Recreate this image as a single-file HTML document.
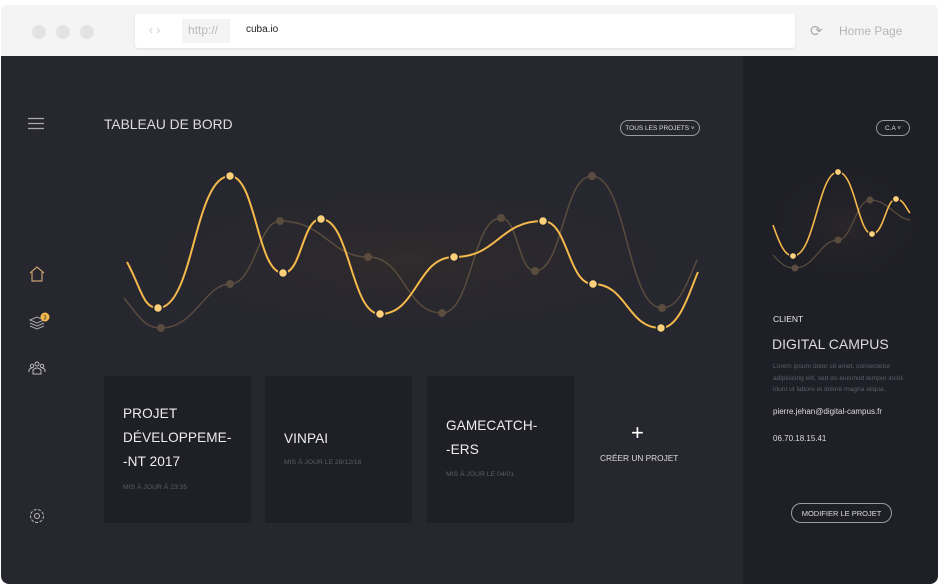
<!DOCTYPE html>
<html><head><meta charset="utf-8"><style>
*{margin:0;padding:0;box-sizing:border-box}
body{width:939px;height:585px;background:#fff;font-family:"Liberation Sans",sans-serif;position:relative;overflow:hidden}
.top{position:absolute;left:1px;top:5px;width:937px;height:52px;background:#f4f4f4;border-radius:6px 6px 0 0}
.dot{position:absolute;width:14px;height:14px;border-radius:50%;background:#e3e3e3}
.url{position:absolute;left:135px;top:14px;width:660px;height:34px;background:#fff;border-radius:3px;box-shadow:0 1px 3px rgba(0,0,0,.08)}
.main{position:absolute;left:1px;top:56px;width:742px;height:528px;background:#27272f;border-radius:0 0 0 8px}
.side{position:absolute;left:743px;top:56px;width:195px;height:528px;background:#1f1f27;border-radius:0 0 8px 0}
.t{position:absolute;color:#e8e8ea;white-space:nowrap}
.card{position:absolute;top:376px;width:147px;height:147px;background:#1f1f26}
.card .h{position:absolute;left:19px;color:#eee;font-size:13.6px;line-height:24px;letter-spacing:.1px}
.card .s{position:absolute;left:19px;color:#5c5c66;font-size:6.8px;letter-spacing:0}
.pill{position:absolute;border:1px solid #9a9aa2;border-radius:10px;color:#ddd;font-size:6.5px;display:flex;align-items:center;justify-content:center;white-space:nowrap}
</style></head><body>
<div class="top">
<div class="dot" style="left:31px;top:20px"></div><div class="dot" style="left:55px;top:20px"></div><div class="dot" style="left:79px;top:20px"></div>
</div>
<div class="url">
<span class="t" style="left:14px;top:9px;color:#ccc;font-size:12px">‹ ›</span>
<div style="position:absolute;left:47px;top:5px;width:48px;height:24px;background:#f4f4f4"></div>
<span class="t" style="left:53px;top:9px;color:#bbb;font-size:12px">http://</span>
<span class="t" style="left:111px;top:10px;color:#222;font-size:10px">cuba.io</span>
</div>
<span class="t" style="left:810px;top:22px;color:#aaa;font-size:15px">⟳</span>
<span class="t" style="left:839px;top:24px;color:#b5b5b5;font-size:12px">Home Page</span>

<div class="main"></div>
<div class="side"></div>

<svg style="position:absolute;left:28px;top:117px" width="18" height="14"><path d="M0 1.5H16M0 6.5H16M0 11.5H16" stroke="#aaa" stroke-width="1.2"/></svg>
<svg style="position:absolute;left:28px;top:265px" width="18" height="18"><path d="M2 8L9 2L16 8M4 7V16H14V7" fill="none" stroke="#c9a070" stroke-width="1.2"/></svg>
<svg style="position:absolute;left:28px;top:312px" width="22" height="20"><path d="M2 8L9 5L16 8L9 11Z M2 11L9 14L16 11 M2 14L9 17L16 14" fill="none" stroke="#aaa" stroke-width="1"/><circle cx="17" cy="5" r="4.5" fill="#f5b94c"/><text x="15.3" y="7.5" font-size="6" fill="#333" font-family="Liberation Sans">3</text></svg>
<svg style="position:absolute;left:28px;top:360px" width="18" height="16"><g fill="none" stroke="#bbb" stroke-width="1"><circle cx="9" cy="4" r="2"/><circle cx="4" cy="6" r="1.7"/><circle cx="14" cy="6" r="1.7"/><path d="M5 14V10Q9 6 13 10V14Z M1 12V10Q2 8 4 8 M17 12V10Q16 8 14 8"/></g></svg>
<svg style="position:absolute;left:28px;top:507px" width="18" height="18"><circle cx="9" cy="9" r="2.5" fill="none" stroke="#bbb"/><circle cx="9" cy="9" r="6.5" fill="none" stroke="#bbb" stroke-dasharray="3 1.5"/></svg>

<span class="t" style="left:104px;top:117px;font-size:13.8px;color:#ddd;letter-spacing:0">TABLEAU DE BORD</span>
<div class="pill" style="left:620px;top:120px;width:80px;height:16px">TOUS LES PROJETS ˅</div>
<div class="pill" style="left:876px;top:120px;width:34px;height:16px">C.A ˅</div>

<svg style="position:absolute;left:0;top:0" width="939" height="585">
<defs><radialGradient id="g"><stop offset="0" stop-color="#3a3028" stop-opacity=".5"/><stop offset="1" stop-color="#27272f" stop-opacity="0"/></radialGradient>
<radialGradient id="g2"><stop offset="0" stop-color="#2e2a2a" stop-opacity=".7"/><stop offset="1" stop-color="#1f1f27" stop-opacity="0"/></radialGradient></defs>
<ellipse cx="410" cy="260" rx="300" ry="80" fill="url(#g)"/>
<ellipse cx="845" cy="225" rx="85" ry="65" fill="url(#g2)"/>
<path d="M124,298 C140,318 145,328 161,328 C195,328 205,284 230,284 C255,284 258,221 280,221 C325,221 330,257 368,257 C405,257 405,313 442,313 C472,313 472,218 501,218 C518,218 518,271 535,271 C563,271 563,176 592,176 C627,176 627,308 662,308 C680,308 688,280 697,260" fill="none" stroke="#5a4c3e" stroke-width="1.5"/>
<g fill="#5a4c3e"><circle cx="161" cy="328" r="4"/><circle cx="230" cy="284" r="4"/><circle cx="280" cy="221" r="4"/><circle cx="368" cy="257" r="4"/><circle cx="442" cy="313" r="4"/><circle cx="501" cy="218" r="4"/><circle cx="535" cy="271" r="4"/><circle cx="592" cy="176" r="4"/><circle cx="662" cy="308" r="4"/></g>
<path d="M127,262 C142,290 143,308 158,308 C194,308 194,176 230,176 C256,176 257,273 283,273 C302,273 302,219 321,219 C350,219 351,314 380,314 C417,314 417,257 454,257 C498,257 499,221 543,221 C568,221 568,284 593,284 C627,284 627,328 661,328 C680,328 690,290 698,272" fill="none" stroke="#f5b94c" stroke-width="2"/>
<g fill="#fdd07a" stroke="#27272f" stroke-width="1.5"><circle cx="158" cy="308" r="4.5"/><circle cx="230" cy="176" r="4.5"/><circle cx="283" cy="273" r="4.5"/><circle cx="321" cy="219" r="4.5"/><circle cx="380" cy="314" r="4.5"/><circle cx="454" cy="257" r="4.5"/><circle cx="543" cy="221" r="4.5"/><circle cx="593" cy="284" r="4.5"/><circle cx="661" cy="328" r="4.5"/></g>
<path d="M773,255 C782,265 786,268 795,268 C815,268 820,240 838,240 C852,240 856,200 870,200 C888,200 895,218 910,220" fill="none" stroke="#5a4c3e" stroke-width="1.3"/>
<g fill="#5a4c3e"><circle cx="795" cy="268" r="3.5"/><circle cx="838" cy="240" r="3.5"/><circle cx="870" cy="200" r="3.5"/></g>
<path d="M773,225 C780,245 785,256 793,256 C815,256 818,172 838,172 C855,172 858,234 872,234 C884,234 886,199 896,199 C903,199 906,208 910,213" fill="none" stroke="#f5b94c" stroke-width="1.6"/>
<g fill="#fdd07a" stroke="#1f1f27" stroke-width="1.2"><circle cx="793" cy="256" r="3.5"/><circle cx="838" cy="172" r="3.5"/><circle cx="872" cy="234" r="3.5"/><circle cx="896" cy="199" r="3.5"/></g>
</svg>

<div class="card" style="left:104px"><div class="h" style="top:26px">PROJET<br>DÉVELOPPEME-<br>-NT 2017</div><div class="s" style="top:108px">MIS À JOUR À 23:35</div></div>
<div class="card" style="left:265px"><div class="h" style="top:51px">VINPAI</div><div class="s" style="top:83px">MIS À JOUR LE 28/12/16</div></div>
<div class="card" style="left:427px"><div class="h" style="top:38px">GAMECATCH-<br>-ERS</div><div class="s" style="top:95px">MIS À JOUR LE 04/01</div></div>
<span class="t" style="left:631px;top:420px;font-size:22px;color:#fff">+</span>
<span class="t" style="left:600px;top:453px;font-size:8.3px;color:#ddd">CRÉER UN PROJET</span>

<span class="t" style="left:773px;top:314px;font-size:8.5px">CLIENT</span>
<span class="t" style="left:772px;top:336px;font-size:14px;color:#ddd">DIGITAL CAMPUS</span>
<div class="t" style="left:773px;top:361px;font-size:6.6px;line-height:11.5px;color:#5e5e68;white-space:normal;width:140px">Lorem ipsum dolor sit amet, consectetur adipisicing elit, sed do eiusmod tempor incid-idunt ut labore et dolore magna aliqua.</div>
<span class="t" style="left:773px;top:407px;font-size:8px;color:#ddd">pierre.jehan@digital-campus.fr</span>
<span class="t" style="left:773px;top:434px;font-size:8px;color:#ddd">06.70.18.15.41</span>
<div class="pill" style="left:791px;top:503px;width:101px;height:20px;font-size:7.5px">MODIFIER LE PROJET</div>
</body></html>
